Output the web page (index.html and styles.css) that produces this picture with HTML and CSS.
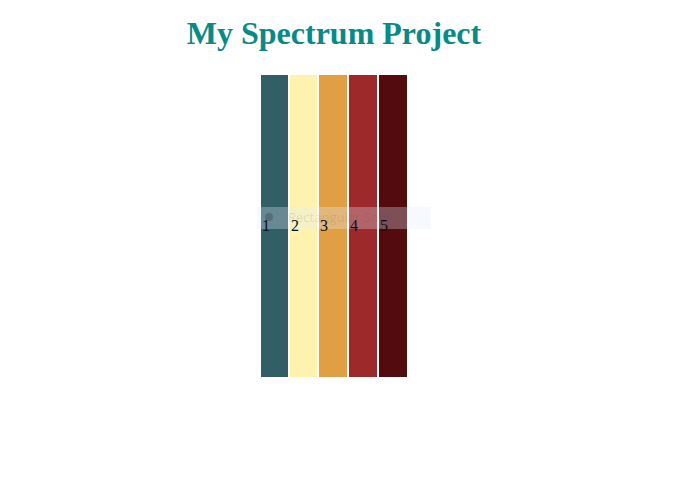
FILE: index.html
```html
<!DOCTYPE html>
<html>
<head>
<meta charset="utf-8">
<link rel="stylesheet" href="styles.css">
</head>
<body>
<main class="page">
  <h1 class="title">My Spectrum Project</h1>
  <div class="spectrum">
    <div class="bar bar-1"><span class="num">1</span></div>
    <div class="bar bar-2"><span class="num">2</span></div>
    <div class="bar bar-3"><span class="num">3</span></div>
    <div class="bar bar-4"><span class="num">4</span></div>
    <div class="bar bar-5"><span class="num">5</span></div>
  </div>
</main>
<div class="snip-hint"><span class="snip-dot"></span><span class="snip-label">Rectangular Snip</span></div>
</body>
</html>
```

FILE: styles.css
```css
html, body {
  margin: 0;
  padding: 0;
  background: #ffffff;
}
.page {
  width: 668px;
  display: flex;
  flex-direction: column;
  align-items: center;
  padding-top: 15px;
}
.title {
  margin: 0;
  font-family: "Liberation Serif", "Times New Roman", serif;
  font-weight: bold;
  font-size: 32px;
  line-height: 37px;
  color: #0a8a87;
}
.spectrum {
  display: flex;
  gap: 2px;
  margin-top: 23px;
}
.bar {
  height: 302px;
  width: 28px;
  display: flex;
  align-items: center;
  font-family: "Liberation Serif", "Times New Roman", serif;
  font-size: 16px;
  color: #0b0b14;
  padding-left: 1px;
  box-sizing: border-box;
}
.num {
  position: relative;
  z-index: 2;
}
.bar-1 { width: 27px; background: #325e66; }
.bar-2 { width: 27px; background: #fef2ae; }
.bar-3 { background: #e19f43; }
.bar-4 { background: #9e292b; }
.bar-5 { background: #540b0e; }
.snip-hint {
  position: absolute;
  z-index: 1;
  left: 257px;
  top: 207px;
  width: 174px;
  height: 22px;
  background: rgba(225, 238, 255, 0.3);
  display: flex;
  align-items: center;
  gap: 15px;
  padding-left: 8px;
  box-sizing: border-box;
}
.snip-dot {
  width: 8px;
  height: 8px;
  border-radius: 50%;
  background: rgba(40, 50, 60, 0.3);
  margin-bottom: 3px;
}
.snip-label {
  font-family: "Open Sans", "Noto Sans", sans-serif;
  font-size: 13px;
  color: rgba(90, 40, 30, 0.13);
  margin-bottom: 2px;
}
```
